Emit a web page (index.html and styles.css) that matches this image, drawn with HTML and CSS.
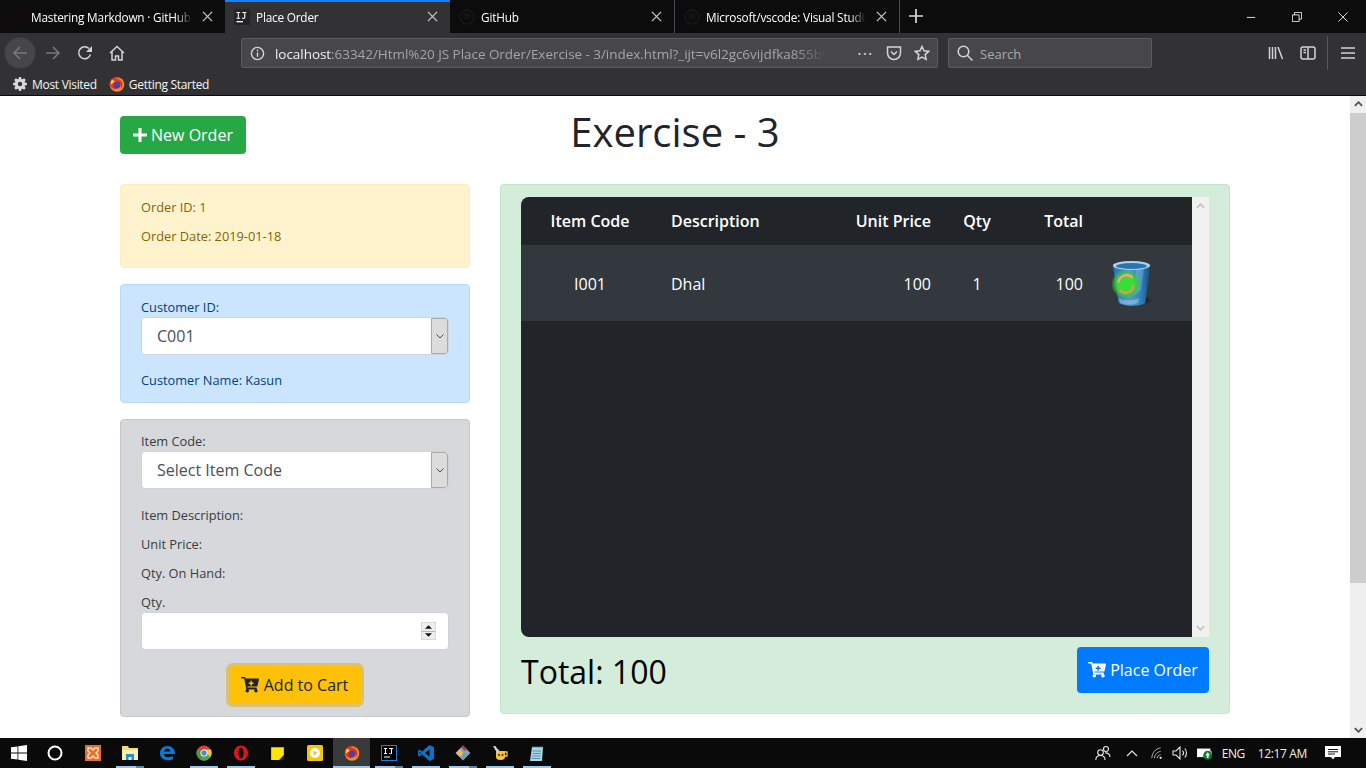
FILE: index.html
```html
<!DOCTYPE html>
<html lang="en">
<head>
<meta charset="utf-8">
<title>Place Order</title>
<link rel="stylesheet" href="styles.css">
</head>
<body>
<svg class="defs" width="0" height="0" aria-hidden="true">
  <defs>
    <symbol id="cart" viewBox="0 0 576 512">
      <path fill-rule="evenodd" d="M24 0h92c11 0 21 8 23 19l6 29h407c15 0 27 14 23 29l-47 208c-3 11-12 19-23 19H204l7 32h275c15 0 27 14 23 29l-5 24c19 9 32 28 32 50 0 31-25 56-56 56s-56-25-56-56c0-18 8-33 21-43H235c13 10 21 25 21 43 0 31-25 56-56 56s-56-25-56-56c0-21 11-39 28-49L102 48H24C11 48 0 37 0 24S11 0 24 0zM300 128v44h-44c-7 0-12 5-12 12v24c0 7 5 12 12 12h44v44c0 7 5 12 12 12h24c7 0 12-5 12-12v-44h44c7 0 12-5 12-12v-24c0-7-5-12-12-12h-44v-44c0-7-5-12-12-12h-24c-7 0-12 5-12 12z"/>
    </symbol>
    <symbol id="ffox" viewBox="0 0 16 16">
      <circle cx="8" cy="8.500" r="7.300" fill="#f58a1f"/>
      <path d="M1 7C2 3 5 .6 9 .8c-1 .6-1.500 1.300-1.600 2C10 3 12 4 13 6c1 2 .5 5-1.500 6.500 1-2.500-.5-5-3-5.500-2-.4-3.500 1-3 3 .4 1.500 2 2.500 3.500 2.300-2 1.500-5 1-6.500-1C1.500 10.500.7 8.800 1 7z" fill="#e5352b"/>
      <circle cx="8" cy="9" r="3.400" fill="#5a3a9a"/>
      <path d="M3 3.500C2 5 1.500 7 2 9c1-1.500 2-2.500 4-3C5 5 4 4 3 3.500z" fill="#ffcb2e"/>
    </symbol>
    <symbol id="ghub" viewBox="0 0 16 16">
      <circle cx="8" cy="8" r="7" fill="none" stroke="#18181a" stroke-width="1.500"/>
      <circle cx="8" cy="7" r="3.500" fill="#131314"/>
    </symbol>
    <symbol id="ij" viewBox="0 0 16 16">
      <rect width="16" height="16" fill="#242426"/>
      <rect x="2.500" y="12" width="6.500" height="1.300" fill="#fff"/>
      <path d="M2.500 3h3.600v1H4.800v4.800h1.300v1H2.500v-1h1.300V4H2.500zM8.300 3h4v1h-1v4.600c0 1-.8 1.400-1.800 1.400-.7 0-1.200-.2-1.600-.5l.5-.9c.3.200.6.400 1 .4.500 0 .8-.2.800-.7V4H8.300z" fill="#fff"/>
    </symbol>
  </defs>
</svg>

<header class="chrome">
  <div class="tabstrip">
    <div class="tab">
      <svg class="favicon" viewBox="0 0 16 16"><circle cx="8" cy="8" r="7" fill="none" stroke="#1c0a0a" stroke-width="1.500"/><circle cx="8" cy="7" r="3.500" fill="#170808"/></svg>
      <span class="tab-title">Mastering Markdown · GitHub Guides</span>
      <svg class="tab-close" viewBox="0 0 12 12"><path d="M1 1l10 10M11 1L1 11"/></svg>
    </div>
    <div class="tab tab-active">
      <svg class="favicon"><use href="#ij"/></svg>
      <span class="tab-title">Place Order</span>
      <svg class="tab-close" viewBox="0 0 12 12"><path d="M1 1l10 10M11 1L1 11"/></svg>
    </div>
    <div class="tab tab-divided">
      <svg class="favicon"><use href="#ghub"/></svg>
      <span class="tab-title">GitHub</span>
      <svg class="tab-close" viewBox="0 0 12 12"><path d="M1 1l10 10M11 1L1 11"/></svg>
    </div>
    <div class="tab tab-divided">
      <svg class="favicon"><use href="#ghub"/></svg>
      <span class="tab-title">Microsoft/vscode: Visual Studio Code</span>
      <svg class="tab-close" viewBox="0 0 12 12"><path d="M1 1l10 10M11 1L1 11"/></svg>
    </div>
    <svg class="new-tab" viewBox="0 0 14 14"><path d="M7 0v14M0 7h14"/></svg>
    <div class="window-controls">
      <svg viewBox="0 0 12 12"><path d="M1 6.500h10"/></svg>
      <svg viewBox="0 0 12 12"><path d="M.5 3.500h8v8h-8zM3 3.500V.5h8.500v8h-3"/></svg>
      <svg viewBox="0 0 12 12"><path d="M.5.500l11 11M11.500.500l-11 11"/></svg>
    </div>
  </div>

  <div class="toolbar">
    <div class="nav-back">
      <svg viewBox="0 0 16 16" class="tb-icon tb-dim"><path d="M15 8H2M8 2L2 8l6 6"/></svg>
    </div>
    <svg viewBox="0 0 16 16" class="tb-icon tb-dim nav-fwd"><path d="M1 8h13M8 2l6 6-6 6"/></svg>
    <svg viewBox="0 0 16 16" class="tb-icon nav-reload"><path d="M13.500 9.500A6 6 0 1 1 12 3.500"/><path class="solid" d="M15 1v6H9z"/></svg>
    <svg viewBox="0 0 16 16" class="tb-icon nav-home"><path d="M1 8l7-6.500L15 8M3 6.500V15h3.500v-4h3v4H13V6.500"/></svg>
    <div class="urlbar">
      <svg viewBox="0 0 16 16" class="tb-icon info"><circle cx="8" cy="8" r="6.500"/><path d="M8 7v4.500M8 4v1.500"/></svg>
      <span class="url"><span class="url-host">localhost</span>:63342/Html%20 JS Place Order/Exercise - 3/index.html?_ijt=v6l2gc6vijdfka855b9c4q7rnd</span>
      <span class="dots">•••</span>
      <svg viewBox="0 0 16 16" class="tb-icon pocket"><path d="M1.500 2h13v6a6.500 6.500 0 0 1-13 0zM5 6.500l3 3 3-3"/></svg>
      <svg viewBox="0 0 16 16" class="tb-icon star"><path d="M8 1.500l2 4.300 4.700.6-3.500 3.200.9 4.700L8 12l-4.100 2.300.9-4.700-3.500-3.200 4.700-.6z"/></svg>
    </div>
    <div class="searchbar">
      <svg viewBox="0 0 16 16" class="tb-icon"><circle cx="6.500" cy="6.500" r="5.300"/><path d="M10.500 10.500l5 5"/></svg>
      <span class="search-text">Search</span>
    </div>
    <svg viewBox="0 0 16 16" class="tb-icon library"><path d="M1.500 2v12M4.500 2v12M7.500 2v12M10 2l4.500 12"/></svg>
    <svg viewBox="0 0 16 16" class="tb-icon sidebar"><rect x="1" y="2" width="14" height="12" rx="2"/><path d="M8 2v12M3.500 5h2.500M3.500 7.500h2.500"/></svg>
    <span class="tb-sep"></span>
    <svg viewBox="0 0 16 16" class="tb-icon menu"><path d="M1 3h14M1 8h14M1 13h14"/></svg>
  </div>

  <div class="bookmarks">
    <span class="bookmark">
      <svg viewBox="0 0 16 16" class="bm-icon"><path fill="#d8d8d8" fill-rule="evenodd" d="M6.800 0h2.400l.4 2.200 1.200.5L12.700 1.400l1.900 1.900-1.300 1.900.5 1.200 2.200.4v2.400l-2.200.4-.5 1.200 1.300 1.900-1.900 1.900-1.900-1.300-1.200.5-.4 2.200H6.800l-.4-2.200-1.200-.5-1.900 1.300-1.900-1.900 1.300-1.900-.5-1.200L0 9.200V6.800l2.200-.4.5-1.200-1.300-1.900 1.900-1.900 1.900 1.300 1.200-.5zM8 5.500a2.500 2.500 0 1 0 0 5 2.500 2.500 0 0 0 0-5z"/></svg>
      Most Visited
    </span>
    <span class="bookmark">
      <svg class="bm-icon"><use href="#ffox"/></svg>
      Getting Started
    </span>
  </div>
</header>

<div class="viewport">
  <main class="page">
    <div class="page-head">
      <button class="btn btn-new" type="button">
        <svg viewBox="0 0 14 14" class="plus"><path d="M5.500 0h3v5.500H14v3H8.500V14h-3V8.500H0v-3h5.500z"/></svg>New Order
      </button>
      <h1 class="title">Exercise - 3</h1>
    </div>

    <div class="columns">
      <section class="side">
        <div class="card card-warning">
          <p class="line">Order ID: 1</p>
          <p class="line">Order Date: 2019-01-18</p>
        </div>

        <div class="card card-info">
          <p class="line line-tight">Customer ID:</p>
          <div class="select"><span class="select-value">C001</span><span class="select-arrow"><svg viewBox="0 0 8 5"><path d="M.5.500L4 4 7.500.500"/></svg></span></div>
          <p class="line line-after">Customer Name: Kasun</p>
        </div>

        <div class="card card-muted">
          <p class="line line-tight">Item Code:</p>
          <div class="select"><span class="select-value">Select Item Code</span><span class="select-arrow"><svg viewBox="0 0 8 5"><path d="M.5.500L4 4 7.500.500"/></svg></span></div>
          <p class="line line-after-lg">Item Description:</p>
          <p class="line">Unit Price:</p>
          <p class="line">Qty. On Hand:</p>
          <p class="line line-tight">Qty.</p>
          <div class="numinput">
            <span class="spinner">
              <span class="spin"><svg viewBox="0 0 8 4"><path d="M4 0l4 4H0z"/></svg></span>
              <span class="spin"><svg viewBox="0 0 8 4"><path d="M0 0h8L4 4z"/></svg></span>
            </span>
          </div>
          <div class="cart-row">
            <button class="btn btn-cart" type="button"><svg class="cart-icon"><use href="#cart"/></svg>Add to Cart</button>
          </div>
        </div>
      </section>

      <section class="card card-success order">
        <div class="table-wrap">
          <div class="table-body">
            <table class="items">
              <colgroup><col class="c-code"><col class="c-desc"><col class="c-price"><col class="c-qty"><col class="c-total"><col class="c-del"></colgroup>
              <thead>
                <tr><th class="center">Item Code</th><th>Description</th><th class="right">Unit Price</th><th class="center">Qty</th><th class="right">Total</th><th></th></tr>
              </thead>
              <tbody>
                <tr>
                  <td class="center">I001</td><td>Dhal</td><td class="right">100</td><td class="center">1</td><td class="right">100</td>
                  <td>
                    <svg class="bin" viewBox="0 0 46 48">
                      <defs>
                        <linearGradient id="binfill" x1="0" x2="1"><stop offset="0" stop-color="#2272b4"/><stop offset=".45" stop-color="#5298cc"/><stop offset=".75" stop-color="#3580bb"/><stop offset="1" stop-color="#14507f"/></linearGradient>
                        <radialGradient id="glow"><stop offset=".5" stop-color="#35e035"/><stop offset=".75" stop-color="#35d035" stop-opacity=".75"/><stop offset="1" stop-color="#35d035" stop-opacity="0"/></radialGradient>
                        <radialGradient id="shadow"><stop offset="0" stop-color="#000" stop-opacity=".7"/><stop offset="1" stop-color="#000" stop-opacity="0"/></radialGradient>
                      </defs>
                      <ellipse cx="30" cy="40" rx="11" ry="4.500" fill="url(#shadow)"/>
                      <path d="M1 6c0-6 37-6 37 0l-4.500 36c-1 5-25 5-27 0z" fill="url(#binfill)"/>
                      <path d="M24 9l8-1-3 22-7 6z" fill="#9fcdea" opacity=".3"/>
                      <path d="M7 38c4 3 14 3 20 0l-1 5c-5 2-13 2-18 0z" fill="#a8d4ee" opacity=".45"/>
                      <ellipse cx="19.500" cy="5.500" rx="18.500" ry="4.500" fill="#a9d6f0"/>
                      <ellipse cx="19.500" cy="6" rx="15.500" ry="3" fill="#2c74b0"/>
                      <circle cx="14" cy="24" r="15" fill="url(#glow)"/>
                      <path d="M20.500 18a8 8 0 0 0-14 4.500" fill="none" stroke="#f5a37c" stroke-width="2.600"/>
                      <path d="M7.500 30a8 8 0 0 0 14-4.500" fill="none" stroke="#f09060" stroke-width="2.600"/>
                    </svg>
                  </td>
                </tr>
              </tbody>
            </table>
          </div>
          <div class="tbl-scroll">
            <svg viewBox="0 0 10 6"><path d="M1 5l4-4 4 4"/></svg>
            <svg viewBox="0 0 10 6"><path d="M1 1l4 4 4-4"/></svg>
          </div>
        </div>
        <div class="order-foot">
          <span class="grand-total">Total: 100</span>
          <button class="btn btn-place" type="button"><svg class="cart-icon"><use href="#cart"/></svg>Place Order</button>
        </div>
      </section>
    </div>
  </main>

  <aside class="vscroll">
    <svg viewBox="0 0 10 6"><path d="M1 5l4-4 4 4"/></svg>
    <span class="vthumb"></span>
    <svg viewBox="0 0 10 6"><path d="M1 1l4 4 4-4"/></svg>
  </aside>
</div>

<footer class="taskbar">
  <span class="task">
    <svg viewBox="0 0 16 16" class="ti"><path fill="#fff" d="M0 2.300l6.500-.9v6.200H0zM7.300 1.300L16 0v7.600H7.300zM0 8.400h6.500v6.200L0 13.700zM7.300 8.400H16V16l-8.700-1.300z"/></svg>
  </span>
  <span class="task task-cortana">
    <svg viewBox="0 0 16 16" class="ti"><circle cx="8" cy="8" r="6.500" fill="none" stroke="#fff" stroke-width="2"/></svg>
  </span>
  <span class="task">
    <svg viewBox="0 0 16 16" class="ti"><rect width="16" height="16" fill="#e3702d"/><path d="M3 3h3l2 2 2-2h3v3l-2 2 2 2v3h-3l-2-2-2 2H3v-3l2-2-2-2z" fill="none" stroke="#ffe0c8" stroke-width="1.400"/></svg>
  </span>
  <span class="task open multi">
    <svg viewBox="0 0 16 16" class="ti"><path fill="#f6d77c" d="M0 1h6l1 2h9v12H0z"/><path fill="#fdeeb0" d="M0 5h16v10H0z"/><path fill="#1d92d8" d="M4 15V9h8v6h-2.500v-3h-3v3z"/></svg>
  </span>
  <span class="task">
    <svg viewBox="0 0 16 16" class="ti"><path fill="#0f78d4" d="M8.500 1C13 1 16 4 16 9H5c0 3 4 4.500 9 2.300v3C8 16.500 1 14.500 1 8.500 1 4 4 1 8.500 1zM5.200 6.500h6C11 4.500 10 3.500 8.300 3.500 6.700 3.500 5.600 4.800 5.200 6.500z"/></svg>
  </span>
  <span class="task open">
    <svg viewBox="0 0 16 16" class="ti"><circle cx="8" cy="8" r="7.500" fill="#d9423a"/><path d="M8 8L15.500 8A7.500 7.500 0 0 1 4 14.500z" fill="#4aa84d"/><path d="M8 8L4 14.500A7.500 7.500 0 0 1 1.500 4z" fill="#3ea044" opacity=".9"/><path d="M8 4.500h7a7.500 7.500 0 0 1-1 7.500z" fill="#f7c52e"/><circle cx="8" cy="8" r="3.600" fill="#fff"/><circle cx="8" cy="8" r="2.700" fill="#4f86e0"/></svg>
  </span>
  <span class="task open">
    <svg viewBox="0 0 16 16" class="ti"><path fill-rule="evenodd" fill="#d8161d" d="M8 .5c4 0 7 3.400 7 7.500s-3 7.500-7 7.500S1 12.100 1 8 4 .5 8 .5zM8 2.500C6.500 2.500 5.500 5 5.500 8s1 5.500 2.500 5.500S10.500 11 10.500 8 9.500 2.500 8 2.500z"/></svg>
  </span>
  <span class="task">
    <svg viewBox="0 0 16 16" class="ti ti-sm"><path fill="#ffe600" d="M2 2h12v8l-4 4H2z"/><path fill="#222" d="M14 9.500V14H9.500z"/></svg>
  </span>
  <span class="task">
    <svg viewBox="0 0 16 16" class="ti"><rect width="16" height="16" rx="1.500" fill="#f0c60f"/><circle cx="8" cy="8" r="5" fill="#fff"/><path d="M6.500 5.500l4 2.500-4 2.500z" fill="#f0c60f"/></svg>
  </span>
  <span class="task open active">
    <svg class="ti"><use href="#ffox"/></svg>
  </span>
  <span class="task open multi">
    <svg viewBox="0 0 16 16" class="ti"><rect x=".5" y=".5" width="15" height="15" fill="#000" stroke="#1f7fd6"/><rect x="3" y="11.500" width="6" height="1" fill="#fff"/><path d="M3 3h3v1H5v4h1v1H3V8h1V4H3zM8 3h4v1h-1v4c0 1-.7 1.300-1.500 1.300-.7 0-1.100-.2-1.500-.5l.4-.8c.3.200.6.400 1 .4s.6-.2.600-.6V4H8z" fill="#fff"/></svg>
  </span>
  <span class="task open">
    <svg viewBox="0 0 16 16" class="ti"><path fill="#0f72c0" d="M11.500 0L16 2v12l-4.500 2L4 9.500 1.500 11.500 0 10.500V5.500l1.500-1L4 6.500zM11.500 4.500L7 8l4.500 3.500zM1.500 6.500v3L3 8z"/></svg>
  </span>
  <span class="task open multi">
    <svg viewBox="0 0 16 16" class="ti"><path fill="#7f9fdc" d="M8 .5L15.500 8 8 15.500.5 8z"/><path fill="#f0c040" d="M1 8l4-4 3 4-3 4z"/><path fill="#a94438" d="M6 2l2-1.500L12 4l-2 2z"/><path fill="#6cb04a" d="M8 9l3-1 1 3-4 3.500z"/></svg>
  </span>
  <span class="task open">
    <svg viewBox="0 0 16 16" class="ti"><path fill="#f0c93a" d="M4 6h9v6c0 2-1.500 3-4.500 3S4 14 4 12z"/><path fill="none" stroke="#f0c93a" stroke-width="1.300" d="M13 7h2v4h-2"/><path fill="#d8d8d8" d="M1 1.500c1.500-1 3-.5 3.500 1S6 5 7.500 5L6 6.500C4 6.500 3 5 2.500 3.500z"/><circle cx="7" cy="10" r="1.200" fill="#a33"/><circle cx="10.500" cy="10" r="1.200" fill="#a33"/></svg>
  </span>
  <span class="task open">
    <svg viewBox="0 0 16 16" class="ti"><path fill="#a8d8e8" d="M3 2h11l-1 14H1z"/><path stroke="#4a7d92" stroke-width=".8" d="M4 1v2M6 1v2M8 1v2M10 1v2M12 1v2M3.500 6h8.500M3.300 8.500h8.500M3 11h8.500M2.800 13.500h8.500"/></svg>
  </span>

  <div class="tray">
    <svg viewBox="0 0 16 16" class="tray-ic people"><circle cx="5.500" cy="7.500" r="2.800"/><path d="M.8 15c0-3 2-4.500 4.700-4.500S10 12 10 15"/><circle cx="11" cy="4" r="2.500"/><path d="M10 8c2.500-.5 5 1 5 4"/></svg>
    <svg viewBox="0 0 12 7" class="tray-ic caret"><path d="M1 6l5-5 5 5"/></svg>
    <svg viewBox="0 0 16 16" class="tray-ic wifi"><path d="M1 14C1 8 5 3 11 2M4 14c0-4 3-7 7-8M7 14c0-2 2-4 4-4"/><circle class="solid-w" cx="11" cy="13.500" r="1.300"/></svg>
    <svg viewBox="0 0 16 16" class="tray-ic vol"><path d="M1 6h3l4-4v12l-4-4H1zM10.500 5.500c1.300 1.500 1.300 3.500 0 5M12.800 3.500c2.200 2.500 2.200 6.500 0 9"/></svg>
    <svg viewBox="0 0 18 14" class="tray-ic batt"><rect x=".5" y="2" width="14" height="8.500" fill="#fff" stroke="#fff"/><rect x="15" y="4.500" width="1.500" height="4" fill="#fff"/><circle cx="12" cy="9" r="5" fill="#0e7a36"/><path d="M12 5.500l2.500 3.500H13v3h-2V9H9.500z" fill="#fff"/></svg>
    <span class="lang">ENG</span>
    <span class="clock">12:17 AM</span>
    <svg viewBox="0 0 16 16" class="notif"><path fill="#fff" d="M0 1h16v11h-6l-2 2.500L6 12H0z"/><path stroke="#111" d="M3 4.500h10M3 6.800h10M3 9h7"/></svg>
  </div>
</footer>
</body>
</html>
```

FILE: styles.css
```css
* { box-sizing: border-box; }
html, body { height: 100%; }
body {
  margin: 0;
  height: 768px;
  overflow: hidden;
  display: flex;
  flex-direction: column;
  font-family: "Open Sans", "Noto Sans", sans-serif;
  background: #fff;
}
.defs { display: block; height: 0; }
svg { display: block; flex: none; }

/* Browser chrome */
.chrome { flex: none; background: #323234; border-bottom: 1px solid #0c0c0d; color: #fff; height: 96px; }
.tabstrip { height: 33px; background: #0c0c0d; display: flex; align-items: stretch; }
.tab { width: 225px; display: flex; align-items: center; padding-left: 9px; padding-right: 12px; font-size: 11.8px; color: #fff; }
.tab-active { background: #323234; border-top: 2px solid #0a84ff; padding-bottom: 2px; }
.tab-divided { border-right: 1px solid #4a4a4f; }
.favicon { width: 16px; height: 16px; margin-right: 6px; }
.tab-title { flex: 1; white-space: nowrap; overflow: hidden; letter-spacing: -.2px; -webkit-mask-image: linear-gradient(to right, #000 90%, transparent); mask-image: linear-gradient(to right, #000 90%, transparent); }
.tab-close { width: 11px; height: 11px; margin-left: 10px; stroke: #c8c8c8; stroke-width: 1.400; fill: none; }
.new-tab { width: 14px; height: 14px; margin: 9px 0 0 9px; stroke: #dcdcdc; stroke-width: 1.700; fill: none; }
.window-controls { margin-left: auto; display: flex; align-items: center; gap: 36px; padding-right: 18px; }
.window-controls svg { width: 10px; height: 10px; fill: none; stroke: #fff; stroke-width: 1; }

.toolbar { height: 37px; display: flex; align-items: center; padding-left: 4px; padding-top: 3px; }
.tb-icon { width: 16px; height: 16px; fill: none; stroke: #d4d4d5; stroke-width: 1.500; }
.tb-dim { stroke: #7a7a7c; }
.solid { fill: #d4d4d5; stroke: none; }
.nav-back { width: 32px; height: 32px; border-radius: 50%; background: #47474a; border: 1px solid #3e3e40; display: flex; align-items: center; justify-content: center; }
.nav-fwd { margin-left: 9px; }
.nav-reload { margin-left: 16px; }
.nav-home { margin-left: 16px; }
.urlbar { width: 697px; height: 30px; margin-left: 116px; background: #474749; border: 1px solid #5c5c5f; border-radius: 2px; display: flex; align-items: center; padding: 0 7px 0 8px; font-size: 13.5px; color: #a5a5a7; }
.info { width: 15px; height: 15px; }
.url { width: 553px; margin-left: 10px; padding-top: 1px; white-space: nowrap; overflow: hidden; letter-spacing: -.05px; -webkit-mask-image: linear-gradient(to right, #000 94%, transparent); mask-image: linear-gradient(to right, #000 94%, transparent); }
.url-host { color: #f0f0f0; }
.dots { margin-left: 31px; font-size: 9px; letter-spacing: 2px; color: #d4d4d5; }
.pocket { margin-left: 12px; }
.star { margin-left: 12px; }
.searchbar { width: 204px; height: 30px; margin-left: 10px; background: #474749; border: 1px solid #5c5c5f; border-radius: 2px; display: flex; align-items: center; gap: 7px; padding-left: 8px; font-size: 13px; color: #a9a9ab; }
.search-text { padding-top: 1px; }
.library { margin-left: 116px; }
.sidebar { margin-left: 16px; }
.tb-sep { width: 1px; height: 34px; background: #58585a; margin-left: 11px; }
.menu { margin-left: 12px; }

.bookmarks { height: 25px; display: flex; align-items: center; padding: 3px 0 0 13px; font-size: 12px; color: #f5f5f5; gap: 12px; letter-spacing: -.3px; }
.bookmark { display: flex; align-items: center; gap: 4px; }
.bm-icon { width: 16px; height: 16px; }
.bookmark:first-child .bm-icon { width: 14px; height: 14px; margin-right: 1px; }

/* Page */
.viewport { flex: 1; min-height: 0; display: flex; }
.page { flex: 1; padding: 20px 120px 0; color: #212529; }
.page-head { display: grid; grid-template-columns: 1fr auto 1fr; height: 38px; margin-bottom: 30px; align-items: start; }
.title { margin: 0; font-size: 40px; line-height: 31px; font-weight: 400; color: #212529; }
.btn { display: inline-flex; align-items: center; justify-content: center; font-family: inherit; font-size: 16px; border: 0; border-radius: 4px; height: 38px; padding: 0; }
.btn-new { justify-self: start; width: 126px; background: #28a745; color: #fff; }
.plus { width: 14px; height: 14px; fill: #fff; margin-right: 4px; }
.columns { display: flex; gap: 30px; align-items: flex-start; }
.side { width: 350px; display: flex; flex-direction: column; gap: 16px; }
.card { border: 1px solid; border-radius: 4px; padding: 12px 20px; font-size: 12.8px; }
.card-warning { background: #fff3cd; border-color: #ffeeba; color: #856404; height: 84px; }
.card-info { background: #cce5ff; border-color: #b8daff; color: #004085; height: 119px; }
.card-muted { background: #d6d8db; border-color: #c6c8ca; color: #383d41; height: 298px; padding-top: 11px; }
.card-success { background: #d4edda; border-color: #c3e6cb; }
.line { margin: 0 0 8px; line-height: 21px; }
.line-tight { margin-bottom: 0; line-height: 20px; }
.line-after { margin: 15px 0 0; }
.line-after-lg { margin-top: 16px; }
.select { height: 38px; width: 308px; background: #fff; border: 1px solid #ced4da; border-radius: 4px; display: flex; align-items: stretch; font-size: 16px; color: #495057; overflow: hidden; }
.select-value { flex: 1; padding-left: 15px; line-height: 36px; }
.select-arrow { width: 17px; background: #dcdcdc; border: 1px solid #a9a9a9; border-radius: 0 3px 3px 0; display: flex; align-items: center; justify-content: center; }
.select-arrow svg { width: 8px; height: 5px; stroke: #4a4a4a; fill: none; stroke-width: 1; }
.numinput { height: 38px; width: 308px; background: #fff; border: 1px solid #ced4da; border-radius: 4px; display: flex; align-items: center; justify-content: flex-end; padding-right: 12px; }
.spinner { width: 15px; height: 18px; display: flex; flex-direction: column; gap: 1px; background: #b4b4b4; border: 1px solid #d9d9d9; }
.spin { flex: 1; background: #eee; display: flex; align-items: center; justify-content: center; }
.spin svg { width: 7px; height: 4px; fill: #111; }
.cart-row { display: flex; justify-content: center; margin-top: 16px; }
.btn-cart { width: 132px; background: #ffc107; color: #212529; box-shadow: 0 0 0 3px rgba(222, 170, 12, .5); margin-right: 1px; }
.btn-cart .cart-icon { margin-right: 5px; }
.cart-icon { width: 18px; height: 16px; fill: currentColor; margin-right: 4px; }

.order { width: 730px; height: 530px; padding-bottom: 20px; display: flex; flex-direction: column; }
.table-wrap { height: 440px; display: flex; flex: none; }
.table-body { width: 671px; background: #212529; border-radius: 8px 0 0 8px; overflow: hidden; }
.items { width: 671px; table-layout: fixed; border-collapse: collapse; color: #fff; font-size: 16px; }
.c-code { width: 138px; }
.c-desc { width: 164px; }
.c-price { width: 120px; }
.c-qty { width: 68px; }
.c-total { width: 84px; }
.c-del { width: 97px; }
.items th, .items td { padding: 0 12px; text-align: left; vertical-align: middle; }
.items th { height: 48px; font-weight: 600; }
.items td { height: 76px; background: #32383e; font-weight: 400; padding-top: 1px; }
.items .center { text-align: center; }
.items .right { text-align: right; }
.bin { width: 46px; height: 48px; margin: 1px 0 0 5px; }
.tbl-scroll { width: 17px; background: #f1f1f1; display: flex; flex-direction: column; justify-content: space-between; align-items: center; padding: 6px 0; }
.tbl-scroll svg { width: 9px; height: 6px; stroke: #c2c2c2; stroke-width: 2; fill: none; }
.order-foot { display: flex; justify-content: space-between; align-items: center; margin-top: 10px; height: 46px; }
.grand-total { font-size: 32px; color: #000; line-height: 50px; padding-top: 4px; }
.btn-place { width: 132px; height: 46px; background: #007bff; color: #fff; font-size: 16px; }

.vscroll { width: 16px; background: #f0f0f0; display: flex; flex-direction: column; align-items: center; padding: 5px 0; }
.vscroll svg { width: 9px; height: 6px; stroke: #505050; stroke-width: 2; fill: none; }
.vthumb { width: 16px; height: 470px; background: #cdcdcd; margin-top: 6px; margin-bottom: auto; }

/* Taskbar */
.taskbar { flex: none; height: 30px; background: #0a0a0a; display: flex; align-items: stretch; color: #fff; }
.task { width: 37px; display: flex; align-items: center; justify-content: center; }
.task.open { background: linear-gradient(#9cc7ea, #9cc7ea) center bottom / 28px 2px no-repeat; }
.task.multi { background: linear-gradient(to right, #9cc7ea 0 20px, #5d85a6 20px 28px) center bottom / 28px 2px no-repeat; }
.task.active { background: linear-gradient(#9cc7ea, #9cc7ea) bottom / 100% 2px no-repeat, #3a3a3a; }
.task-cortana { padding-right: 2px; }
.ti { width: 16px; height: 16px; }
.ti-sm { width: 17px; height: 17px; }
.tray { margin-left: auto; display: flex; align-items: center; font-size: 12px; color: #eee; padding-right: 25px; }
.tray-ic { width: 16px; height: 16px; fill: none; stroke: #e8e8e8; stroke-width: 1.100; }
.solid-w { fill: #e8e8e8; stroke: none; }
.people { margin-right: 15px; }
.caret { width: 12px; height: 7px; margin-right: 13px; }
.wifi { width: 14px; height: 14px; margin-right: 7px; stroke: #b8b8b8; }
.vol { margin-right: 9px; }
.batt { width: 16px; height: 13px; stroke: none; margin-right: 9px; }
.lang { margin-right: 13px; letter-spacing: -.5px; }
.clock { margin-right: 18px; letter-spacing: -.35px; }
.notif { width: 16px; height: 16px; }
```
